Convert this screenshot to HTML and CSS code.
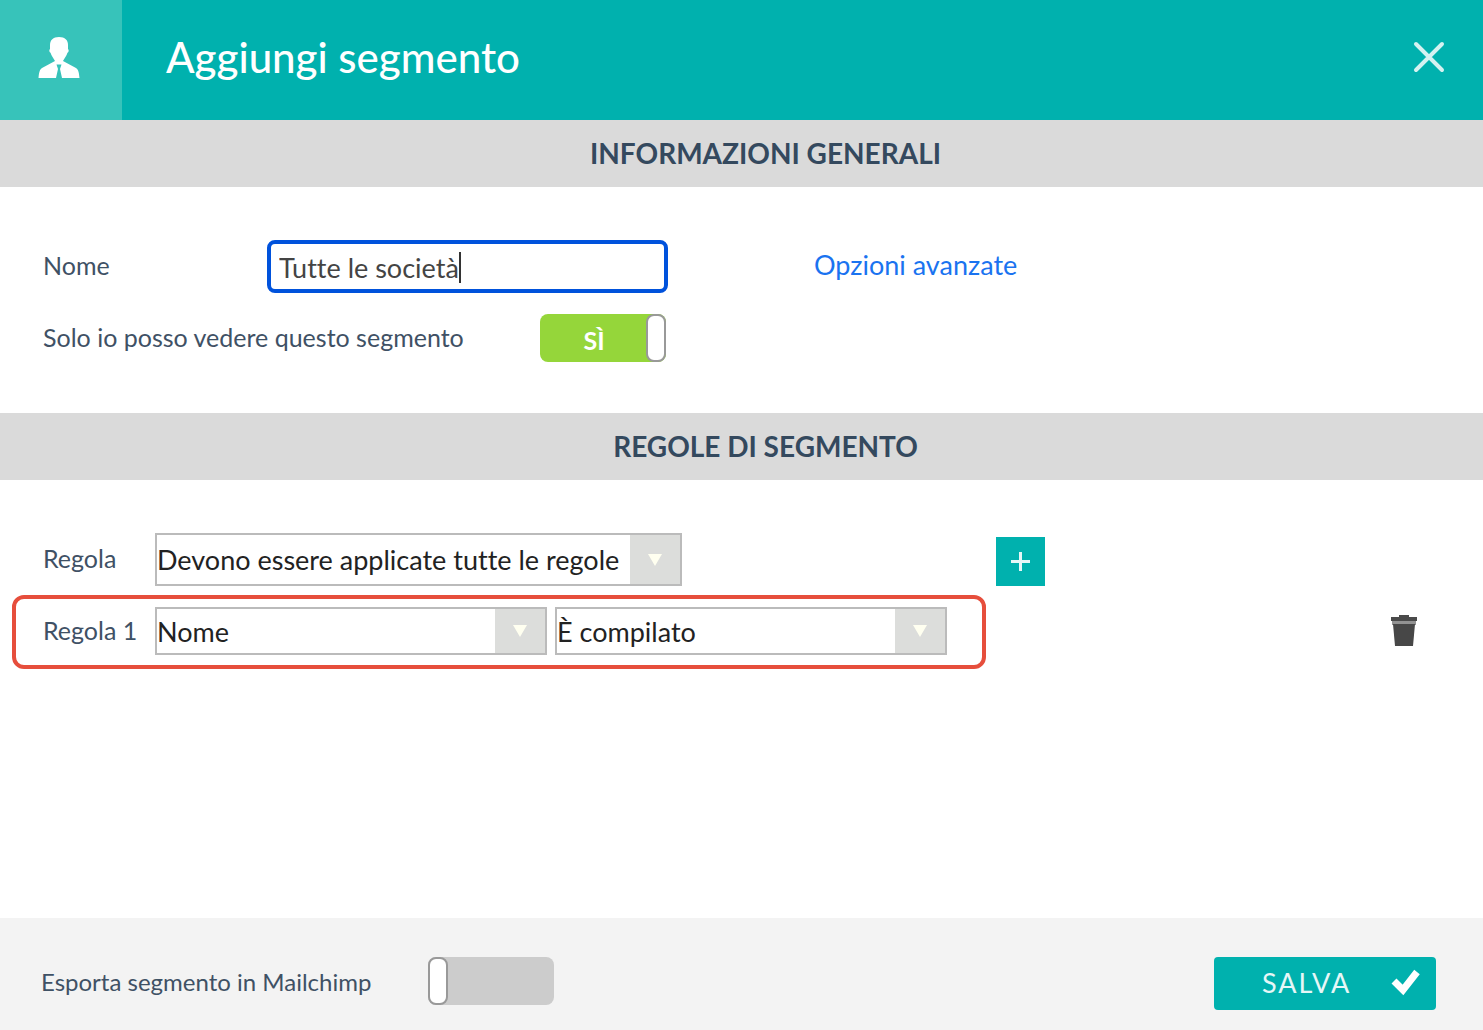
FILE: index.html
```html
<!DOCTYPE html>
<html lang="it">
<head>
<meta charset="utf-8">
<meta name="viewport" content="width=device-width, initial-scale=1">
<title>Aggiungi segmento</title>
<link rel="stylesheet" href="styles.css">
</head>
<body>
<form class="dialog">
  <header class="header">
    <div class="header-icon">
      <svg width="42" height="42" viewBox="0 0 42 42" fill="#fff" aria-hidden="true">
        <path d="M21 0C15 0 12 3 12 8v4c-1 .5-1 3 .5 3.800C13.500 19 15.500 21.500 17 24L4 31C1.500 32.500 1 36 .5 41H18l2-9-1.500-4.500h5L22 32l2 9h17.500C41 36 40.500 32.500 38 31L25 24c1.500-2.500 3.500-5 4.500-8.200C31 15 31 12.500 30 12V8c0-5-3-8-9-8z"/>
      </svg>
    </div>
    <h1 class="title">Aggiungi segmento</h1>
    <button class="close" type="button" aria-label="Chiudi">
      <svg width="32" height="32" viewBox="0 0 32 32" fill="none" stroke="#d5f2f1" stroke-width="4" stroke-linecap="round" aria-hidden="true"><path d="M3 3l26 26M29 3L3 29"/></svg>
    </button>
  </header>

  <h2 class="section-title">INFORMAZIONI GENERALI</h2>
  <section class="general">
    <div class="row">
      <label class="label name-label" for="name">Nome</label>
      <div class="text-field">
        <input class="text-input" id="name" type="text" value="Tutte le società">
        <span class="caret"></span>
      </div>
      <a class="link" href="#">Opzioni avanzate</a>
    </div>
    <div class="row">
      <label class="label private-label" for="private">Solo io posso vedere questo segmento</label>
      <label class="toggle">
        <input class="toggle-input" id="private" type="checkbox" checked>
        <span class="toggle-text">SÌ</span>
      </label>
    </div>
  </section>

  <h2 class="section-title">REGOLE DI SEGMENTO</h2>
  <section class="rules">
    <div class="row rule-head">
      <label class="label rule-label" for="match">Regola</label>
      <div class="select match">
        <select class="select-input" id="match"><option>Devono essere applicate tutte le regole</option></select>
        <span class="select-arrow"><svg width="14" height="12" viewBox="0 0 14 12" aria-hidden="true"><path d="M0 0h14L7 12z" fill="#fffff0"/></svg></span>
      </div>
      <button class="add" type="button" aria-label="Aggiungi regola">
        <svg width="19" height="19" viewBox="0 0 19 19" stroke="#e6f7f7" stroke-width="3" aria-hidden="true"><path d="M9.500 0v19M0 9.500h19"/></svg>
      </button>
    </div>
    <div class="rule-line">
      <div class="highlight">
        <label class="label rule-label" for="field">Regola 1</label>
        <div class="select condition">
          <select class="select-input" id="field"><option>Nome</option></select>
          <span class="select-arrow"><svg width="14" height="12" viewBox="0 0 14 12" aria-hidden="true"><path d="M0 0h14L7 12z" fill="#fffff0"/></svg></span>
        </div>
        <div class="select condition">
          <select class="select-input" aria-label="Condizione"><option>È compilato</option></select>
          <span class="select-arrow"><svg width="14" height="12" viewBox="0 0 14 12" aria-hidden="true"><path d="M0 0h14L7 12z" fill="#fffff0"/></svg></span>
        </div>
      </div>
      <button class="delete" type="button" aria-label="Elimina regola">
        <svg width="28" height="32" viewBox="0 0 28 32" aria-hidden="true">
          <path d="M9 0h10v2h8v4H1V2h8z" fill="#4a4a4a"/>
          <path d="M2 6h24v4H2z" fill="#929292"/>
          <path d="M3 9h22l-2 22H5z" fill="#474747"/>
        </svg>
      </button>
    </div>
  </section>

  <footer class="footer">
    <label class="label export-label" for="export">Esporta segmento in Mailchimp</label>
    <label class="toggle">
      <input class="toggle-input" id="export" type="checkbox">
    </label>
    <button class="save" type="submit">
      <span>SALVA</span>
      <svg width="32" height="28" viewBox="0 0 32 28" fill="none" stroke="#fff" stroke-width="7" aria-hidden="true"><path d="M4 13l9 9L27 4"/></svg>
    </button>
  </footer>
</form>
</body>
</html>
```
FILE: styles.css
```css
*, *::before, *::after { box-sizing: border-box; }

body {
  margin: 0;
  background: #fff;
  color: #3f5165;
  font-family: Lato, "Liberation Sans", sans-serif;
  font-size: 25px;
  font-variant-ligatures: none;
}

button, input, select { font: inherit; font-variant-ligatures: none; color: inherit; }
button { padding: 0; border: 0; background: none; cursor: pointer; }
svg { display: block; }

.dialog {
  display: flex;
  flex-direction: column;
  min-height: 100vh;
}

.header {
  display: flex;
  align-items: center;
  height: 120px;
  padding-right: 38px;
  background: #00b1ae;
}
.header-icon {
  display: grid;
  place-items: center;
  align-self: stretch;
  width: 122px;
  padding: 0 4px 4px 0;
  background: #37c3ba;
}
.title {
  flex: 1;
  margin: 0;
  padding: 0 0 6px 44px;
  color: #fff;
  font-size: 42px;
  font-weight: 500;
}
.close { padding-bottom: 6px; }

.section-title {
  margin: 0;
  padding-left: 48px;
  background: #dadada;
  color: #34495e;
  font-size: 28px;
  font-weight: 700;
  line-height: 67px;
  text-align: center;
}

.row { display: flex; align-items: center; }
.label { padding-bottom: 3px; white-space: nowrap; }

.general {
  display: grid;
  gap: 21px;
  padding: 53px 43px 51px;
}
.name-label { width: 224px; }
.private-label { width: 497px; }
.text-field { position: relative; width: 401px; }
.text-input {
  display: block;
  width: 100%;
  height: 53px;
  padding: 2px 8px 0;
  border: 4px solid #0052dc;
  border-radius: 8px;
  outline: 0;
  background: #fff;
  color: #444;
  font-size: 27px;
}
.caret {
  position: absolute;
  top: 12px;
  left: 192px;
  width: 2px;
  height: 31px;
  background: #333;
}
.link {
  margin-left: 146px;
  padding-bottom: 5px;
  color: #1a73f0;
  font-size: 27px;
  text-decoration: none;
}

.toggle { position: relative; display: block; width: 126px; height: 48px; }
.toggle-input {
  display: block;
  width: 100%;
  height: 100%;
  margin: 0;
  border-radius: 8px;
  appearance: none;
  background: #ccc;
}
.toggle-input:checked { background: #95d63a; }
.toggle-input::after {
  content: "";
  display: block;
  width: 20px;
  height: 48px;
  border: 2px solid #999;
  border-radius: 8px;
  background: #fff;
}
.toggle-input:checked::after { margin-left: auto; }
.toggle-text {
  position: absolute;
  inset: 0 18px 0 0;
  color: #fff;
  font-weight: 700;
  line-height: 52px;
  text-align: center;
}

.rules { flex: 1; padding: 53px 65px 53px 12px; }
.rule-head { padding-left: 31px; }
.rule-label { width: 112px; }
.select { display: grid; align-items: center; }
.select > * { grid-area: 1 / 1; }
.select-input {
  width: 100%;
  height: 100%;
  padding: 0;
  border: 2px solid #bbb;
  border-radius: 0;
  appearance: none;
  background: #fff;
  color: #222;
  font-size: 27px;
}
.select-arrow {
  display: grid;
  place-items: center;
  align-self: stretch;
  justify-self: end;
  width: 50px;
  margin: 2px 2px 2px 0;
  background: #dcdddb;
  pointer-events: none;
}
.match { width: 527px; height: 53px; }
.condition { width: 392px; height: 48px; }
.condition + .condition { margin-left: 8px; }
.add {
  display: grid;
  place-items: center;
  align-self: flex-end;
  width: 49px;
  height: 49px;
  margin-left: 314px;
  background: #00b1ae;
}
.rule-line {
  display: flex;
  align-items: center;
  justify-content: space-between;
  margin-top: 9px;
}
.highlight {
  display: flex;
  align-items: center;
  padding: 8px 35px 10px 27px;
  border: 4px solid #e64e3c;
  border-radius: 12px;
}
.delete { padding-bottom: 2px; }

.footer {
  display: flex;
  align-items: center;
  height: 112px;
  padding: 18px 47px 0 41px;
  background: #f3f3f3;
}
.export-label { width: 387px; font-size: 24px; }
.footer .toggle { margin-bottom: 4px; }
.save {
  display: flex;
  align-items: center;
  justify-content: space-between;
  width: 222px;
  height: 53px;
  margin-left: auto;
  padding: 0 14px 2px 48px;
  border-radius: 4px;
  background: #00b1ae;
  color: #e6f7f7;
  font-size: 27px;
  letter-spacing: 2px;
}
```
